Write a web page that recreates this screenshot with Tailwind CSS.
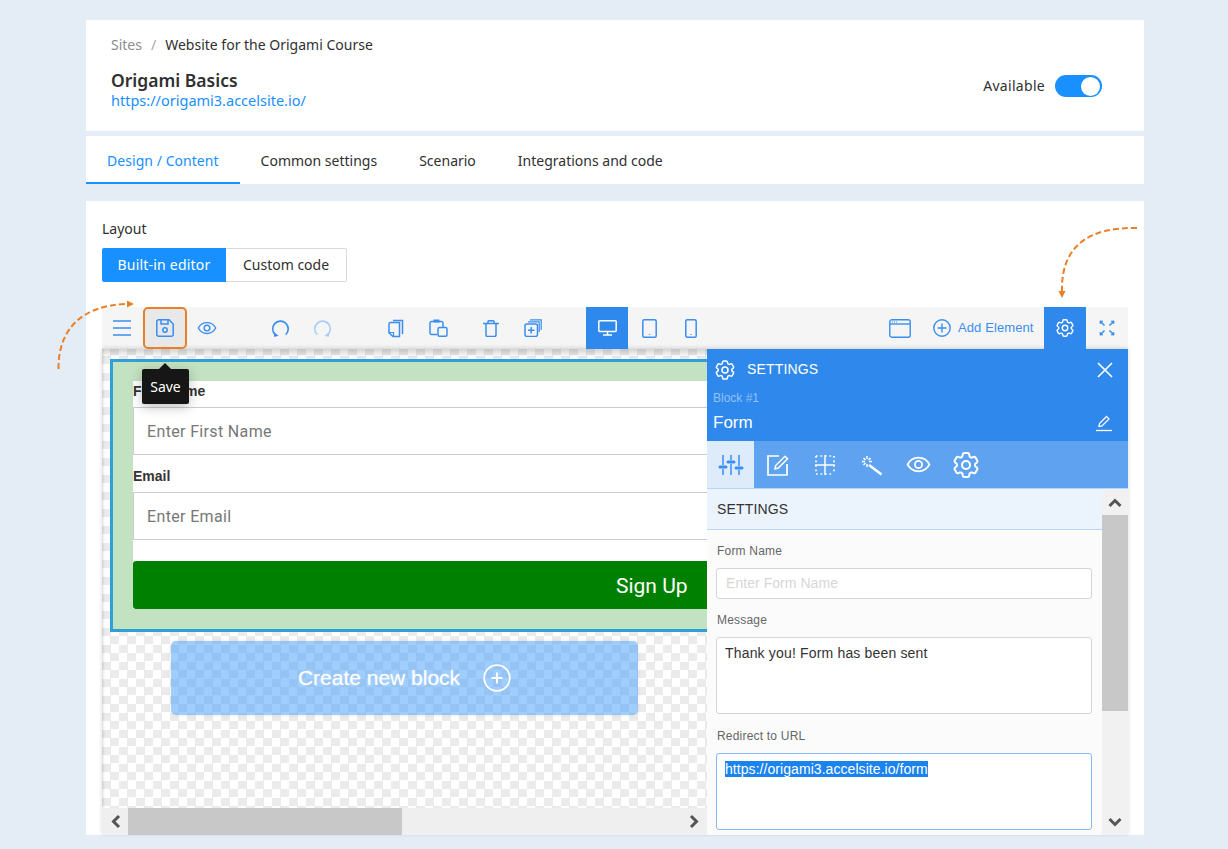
<!DOCTYPE html>
<html lang="en">
<head>
  <meta charset="UTF-8" />
  <title>Origami Basics</title>
  <script src="https://cdn.jsdelivr.net/npm/@tailwindcss/browser@4"></script>
</head>
<body class="bg-[#e4ecf6] font-['Noto_Sans',sans-serif] text-[14px] text-[#303030]">

  <svg class="hidden">
    <symbol id="gear" viewBox="0 0 24 24" fill="none" stroke="currentColor" stroke-width="1.500">
      <path d="M9.594 3.94c.09-.542.56-.94 1.11-.94h2.593c.55 0 1.02.398 1.11.94l.213 1.281c.063.374.313.686.645.87.074.04.147.083.22.127.325.196.72.257 1.075.124l1.217-.456a1.125 1.125 0 0 1 1.37.49l1.296 2.247a1.125 1.125 0 0 1-.26 1.431l-1.003.827c-.293.241-.438.613-.43.992a7.723 7.723 0 0 1 0 .255c-.008.378.137.75.43.991l1.004.827c.424.35.534.955.26 1.43l-1.298 2.247a1.125 1.125 0 0 1-1.369.491l-1.217-.456c-.355-.133-.75-.072-1.076.124a6.47 6.47 0 0 1-.22.128c-.331.183-.581.495-.644.869l-.213 1.281c-.09.543-.56.94-1.11.94h-2.594c-.55 0-1.019-.398-1.11-.94l-.213-1.281c-.062-.374-.312-.686-.644-.87a6.52 6.52 0 0 1-.22-.127c-.325-.196-.72-.257-1.076-.124l-1.217.456a1.125 1.125 0 0 1-1.369-.49l-1.297-2.247a1.125 1.125 0 0 1 .26-1.431l1.004-.827c.292-.24.437-.613.43-.991a6.932 6.932 0 0 1 0-.255c.007-.38-.138-.751-.43-.992l-1.004-.827a1.125 1.125 0 0 1-.26-1.43l1.297-2.247a1.125 1.125 0 0 1 1.37-.491l1.216.456c.356.133.751.072 1.076-.124.072-.044.146-.086.22-.128.332-.183.582-.495.644-.869l.214-1.28Z"/>
      <circle cx="12" cy="12" r="3"/>
    </symbol>
    <symbol id="eye" viewBox="0 0 24 24" fill="none" stroke="currentColor" stroke-width="1.700">
      <path d="M1.500 12C4 7.500 7.700 5.500 12 5.500s8 2 10.500 6.500C20 16.500 16.300 18.500 12 18.500S4 16.500 1.500 12Z"/>
      <circle cx="12" cy="12" r="3.400"/>
    </symbol>
    <symbol id="undo" viewBox="0 0 20 20" fill="none" stroke="currentColor" stroke-width="1.700">
      <path d="M15.500 16.500A8.200 8.200 0 1 0 5 17"/>
      <path d="M2.500 13.500 3.500 19 8 17.500Z" fill="currentColor" stroke="none"/>
    </symbol>
    <symbol id="redo" viewBox="0 0 20 20" fill="none" stroke="currentColor" stroke-width="1.700">
      <path d="M4.500 16.500A8.200 8.200 0 1 1 15 17"/>
      <path d="M17.500 13.500 16.500 19 12 17.500Z" fill="currentColor" stroke="none"/>
    </symbol>
  </svg>

  <div class="relative w-[1228px] h-[849px] overflow-hidden pt-[20px] pl-[86px] pr-[84px]">

    <!-- site header -->
    <div class="bg-white h-[111px] pl-[25px] pr-[42px] pt-[15px] flex justify-between">
      <div>
        <div class="flex leading-[20px]">
          <span class="text-[#8c8c8c]">Sites</span>
          <span class="text-[#a6a6a6] mx-[9px]">/</span>
          <span>Website for the Origami Course</span>
        </div>
        <div class="text-[17.500px] font-semibold leading-[22px] mt-[14px]">Origami Basics</div>
        <div class="text-[#1890ff] text-[14.500px] leading-[20px] -mt-[1px]">https://origami3.accelsite.io/</div>
      </div>
      <div class="flex items-center gap-[10px] h-[22px] mt-[40px]">
        <span class="-mt-[2px] tracking-[0.3px]">Available</span>
        <div class="w-[47px] h-[22px] rounded-full bg-[#1890ff] flex items-center justify-end pr-[2px]">
          <div class="w-[19px] h-[19px] rounded-full bg-white"></div>
        </div>
      </div>
    </div>

    <!-- tabs -->
    <div class="bg-white h-[48px] mt-[5px] flex">
      <div class="px-[21px] h-[48px] leading-[49px] text-[#1890ff] border-b-2 border-[#1890ff] tracking-[0.05px]">Design / Content</div>
      <div class="px-[21px] leading-[49px]">Common settings</div>
      <div class="px-[21px] leading-[49px]">Scenario</div>
      <div class="px-[21px] leading-[49px]">Integrations and code</div>
    </div>

    <!-- layout card -->
    <div class="bg-white h-[634px] mt-[17px] px-[16px] pt-[17px]">
      <div class="leading-[22px]">Layout</div>
      <div class="flex mt-[8px] h-[34px] leading-[34px]">
        <div class="w-[124px] text-center text-white bg-[#1890ff] rounded-l-[2px] tracking-[0.2px]">Built-in editor</div>
        <div class="w-[121px] text-center bg-white border border-l-0 border-[#d9d9d9] rounded-r-[2px] leading-[32px]">Custom code</div>
      </div>

      <div class="mt-[25px] w-[1026px]">
        <!-- toolbar -->
        <div class="h-[42px] bg-[#f5f5f5] flex items-center text-[#3a8eef]">
          <div class="w-[40px] flex justify-center">
            <svg width="18" height="16" viewBox="0 0 18 16" stroke="currentColor" stroke-width="1.500"><path d="M0 1h18M0 8h18M0 15h18"/></svg>
          </div>
          <div class="ml-[1px] w-[44px] h-[42px] bg-[#e8e8e8] border-2 border-[#e8802a] rounded-[5px] flex items-center justify-center">
            <svg width="18" height="18" viewBox="0 0 18 18" fill="none" stroke="currentColor" stroke-width="1.500"><path d="M1.500.8h11.500l4.200 4.200v10.500a1.700 1.700 0 0 1-1.700 1.700H2.500a1.700 1.700 0 0 1-1.700-1.700V2.500A1.700 1.700 0 0 1 2.500.8Z"/><path d="M5 1v4h7V1"/><circle cx="9" cy="11" r="2.200"/></svg>
          </div>
          <div class="w-[39px] flex justify-center">
            <svg width="20" height="20"><use href="#eye"/></svg>
          </div>
          <div class="ml-[33px] w-[42px] flex justify-center">
            <svg width="19" height="19"><use href="#undo"/></svg>
          </div>
          <div class="w-[42px] flex justify-center text-[#a9cdf6]">
            <svg width="19" height="19"><use href="#redo"/></svg>
          </div>
          <div class="ml-[32px] w-[42px] flex justify-center">
            <svg width="16" height="19" viewBox="0 0 16 19" fill="none" stroke="currentColor" stroke-width="1.500"><path d="M2.500 3.500h9v14H5L1 14V5a1.500 1.500 0 0 1 1.500-1.500Z"/><path d="M5 1.500h9.500V15"/><path d="M1 13.500h4.500v4" stroke-width="1.200"/></svg>
          </div>
          <div class="w-[42px] flex justify-center">
            <svg width="19" height="18" viewBox="0 0 19 18" fill="none" stroke="currentColor" stroke-width="1.500"><path d="M8 15.500H2.500A1.500 1.500 0 0 1 1 14V4a1.500 1.500 0 0 1 1.500-1.500h10A1.500 1.500 0 0 1 14 4v4"/><path d="M4.500 2h6" stroke-width="3"/><rect x="9" y="8.500" width="9" height="8.700" rx="1.500"/></svg>
          </div>
          <div class="ml-[11px] w-[42px] flex justify-center">
            <svg width="16" height="17" viewBox="0 0 16 17" fill="none" stroke="currentColor" stroke-width="1.500"><path d="M0 3.500h16M3 3.500V15a1.500 1.500 0 0 0 1.500 1.500h7A1.500 1.500 0 0 0 13 15V3.500M5 3.500V1.500A1 1 0 0 1 6 .8h4a1 1 0 0 1 1 .7v2"/></svg>
          </div>
          <div class="w-[42px] flex justify-center">
            <svg width="18" height="18" viewBox="0 0 18 18" fill="none" stroke="currentColor" stroke-width="1.500"><rect x="1" y="5" width="12.500" height="12.500" rx="2"/><path d="M7.200 8v6.500M4 11.200h6.500"/><path d="M4 2.800h11.200V13M6 .8h11.200V11" stroke-width="1.200"/></svg>
          </div>
          <div class="ml-[32px] w-[42px] h-[42px] bg-[#2f88ec] text-white flex items-center justify-center">
            <svg width="19" height="16" viewBox="0 0 19 16" fill="none" stroke="currentColor" stroke-width="1.500"><rect x=".8" y=".8" width="17.400" height="10.600" rx=".8"/><path d="M9.500 11.500v3M5 15h9"/></svg>
          </div>
          <div class="w-[42px] flex justify-center">
            <svg width="15" height="19" viewBox="0 0 15 19" fill="none" stroke="currentColor" stroke-width="1.500"><rect x=".8" y=".8" width="13.400" height="17.400" rx="1.500"/><path d="M7.500 15.200v.8"/></svg>
          </div>
          <div class="w-[42px] flex justify-center">
            <svg width="12" height="19" viewBox="0 0 12 19" fill="none" stroke="currentColor" stroke-width="1.500"><rect x=".8" y=".8" width="10.400" height="17.400" rx="1.500"/><path d="M6 15.200v.8"/></svg>
          </div>
          <div class="ml-auto w-[42px] flex justify-center">
            <svg width="22" height="19" viewBox="0 0 22 19" fill="none" stroke="currentColor" stroke-width="1.400"><rect x=".8" y=".8" width="20.400" height="17.400" rx="2"/><path d="M1 5h20"/><path d="M3 3h1M5 3h1M7 3h1" stroke-width="1"/></svg>
          </div>
          <div class="w-[123px] flex items-center pl-[12px] gap-[7px] font-['Liberation_Sans',sans-serif] text-[13px] tracking-[0.1px] whitespace-nowrap">
            <svg width="18" height="18" viewBox="0 0 18 18" fill="none" stroke="currentColor" stroke-width="1.400"><circle cx="9" cy="9" r="8.200"/><path d="M9 4.500v9M4.500 9h9"/></svg>
            <span class="-mt-[1px]">Add Element</span>
          </div>
          <div class="w-[42px] h-[42px] bg-[#2f88ec] text-white flex items-center justify-center">
            <svg width="22" height="22"><use href="#gear"/></svg>
          </div>
          <div class="w-[42px] flex justify-center">
            <svg width="16" height="16" viewBox="0 0 16 16" fill="currentColor" stroke="currentColor" stroke-width="1.200"><path d="M1 1l4.500 4.500M15 1l-4.500 4.500M1 15l4.500-4.500M15 15l-4.500-4.500" fill="none" stroke-width="1.500"/><path d="M1 1v3l3-3ZM15 1v3l-3-3ZM1 15v-3l3 3ZM15 15v-3l-3 3Z" stroke-width=".6"/></svg>
          </div>
        </div>

        <!-- editor body -->
        <div class="flex h-[486px] shadow-[0_-1px_4px_rgba(0,0,0,0.15)] font-['Liberation_Sans',sans-serif]">

          <!-- canvas -->
          <div class="w-[605px] flex flex-col shrink-0">
            <div class="h-[459px] overflow-hidden pl-[8px] pt-[10px] bg-[repeating-conic-gradient(#ebebeb_0_25%,#ffffff_0_50%)] bg-[length:17px_17px] bg-[position:0_-2px] shadow-[inset_0_8px_6px_-4px_rgba(0,0,0,0.18),inset_3px_0_3px_-2px_rgba(0,0,0,0.15)]">
              <div class="w-[700px] h-[273px] border-[3px] border-[#2f9fd6] border-r-0 bg-[#c3e2c1] pl-[20px] pt-[19px]">
                <div class="bg-white h-[228px] w-[680px]">
                  <div class="h-[26px] leading-[18px] pt-[1px] font-bold text-[#333]">First Name</div>
                  <div class="h-[48px] border border-[#ccc] pl-[13px] leading-[47px] text-[16px] text-[#777] font-['Roboto',sans-serif] tracking-[0.35px]">Enter First Name</div>
                  <div class="h-[37px] leading-[42px] font-bold text-[#333]">Email</div>
                  <div class="h-[48px] border border-[#ccc] pl-[13px] leading-[47px] text-[16px] text-[#777] font-['Roboto',sans-serif] tracking-[0.35px]">Enter Email</div>
                  <div class="h-[21px]"></div>
                  <div class="h-[48px] bg-[#008000] rounded-[3px] text-white text-[21px] font-['Roboto',sans-serif] leading-[50px] pl-[483px]">Sign Up</div>
                </div>
              </div>
              <div class="ml-[61px] mt-[9px] w-[467px] h-[74px] rounded-[5px] bg-[#3f9bfb]/50 flex items-center justify-center gap-[23px] text-white text-[21px] shadow-[0_0_4px_rgba(0,0,0,0.08)]">
                <span class="[text-shadow:0_0_2px_rgba(255,255,255,0.5)]">Create new block</span>
                <svg width="28" height="28" viewBox="0 0 28 28" fill="none" stroke="white" stroke-width="1.800"><circle cx="14" cy="14" r="12.800"/><path d="M14 8.500v11M8.500 14h11"/></svg>
              </div>
            </div>
            <!-- horizontal scrollbar -->
            <div class="h-[27px] bg-[#efefef] flex items-stretch">
              <div class="w-[26px] flex items-center justify-center">
                <svg width="11" height="15" viewBox="0 0 11 15" fill="none" stroke="#555" stroke-width="3"><path d="M9 2 3.500 7.500 9 13"/></svg>
              </div>
              <div class="w-[274px] bg-[#c8c8c8]"></div>
              <div class="ml-auto w-[26px] flex items-center justify-center">
                <svg width="11" height="15" viewBox="0 0 11 15" fill="none" stroke="#555" stroke-width="3"><path d="M2 2l5.500 5.500L2 13"/></svg>
              </div>
            </div>
          </div>

          <!-- settings panel -->
          <div class="w-[421px] flex flex-col relative z-10">
            <div class="h-[92px] bg-[#2f88ec] text-white relative">
              <div class="flex items-center h-[41px] pl-[6px]">
                <svg width="24" height="24" class="shrink-0"><use href="#gear"/></svg>
                <span class="ml-[10px] tracking-[0.15px]">SETTINGS</span>
                <svg width="16" height="16" viewBox="0 0 16 16" stroke="white" stroke-width="1.700" class="ml-auto mr-[15px]"><path d="M1 1l14 14M15 1 1 15"/></svg>
              </div>
              <div class="pl-[6px] text-[12px] leading-[14px] text-[#93c0f5] mt-[1px]">Block #1</div>
              <div class="flex items-center pl-[6px] mt-[6px] text-[17px] leading-[24px]">
                <span>Form</span>
                <svg width="18" height="18" viewBox="0 0 18 18" fill="none" stroke="white" stroke-width="1.300" class="ml-auto mr-[15px]"><path d="M4 12.500 4.500 9.500 11.500 2.500 14 5 7 12 4 12.500Z"/><path d="M1 16.500h16"/></svg>
              </div>
            </div>
            <div class="h-[47px] bg-[#5fa3f0] flex text-white">
              <div class="w-[47px] bg-[#deebfb] text-[#3a8eef] flex items-center justify-center">
                <svg width="26" height="22" viewBox="0 0 26 22" fill="none" stroke="currentColor" stroke-width="1.500"><path d="M5 1v10M5 15v6M13 1v5M13 10v11M21 1v11M21 16v5"/><path d="M2 13h6M10 8h6M18 14h6" stroke-width="3" stroke-linecap="round"/></svg>
              </div>
              <div class="w-[47px] flex items-center justify-center">
                <svg width="22" height="22" viewBox="0 0 22 22" fill="none" stroke="white" stroke-width="1.700"><path d="M12 2H1v19h19V10"/><path d="M8 15l.7-3.500L18 2.200 20.500 4.700 11.300 14 8 15Z" stroke-width="1.500"/></svg>
              </div>
              <div class="w-[47px] flex items-center justify-center">
                <svg width="20" height="20" viewBox="0 0 20 20" fill="none" stroke="white" stroke-width="1.500"><path d="M10 0v20M0 10h20"/><path d="M1 1v18M19 1v18M1 1h18M1 19h18" stroke-width="1.700" stroke-dasharray="1.700 2.800"/></svg>
              </div>
              <div class="w-[47px] flex items-center justify-center">
                <svg width="22" height="22" viewBox="0 0 22 22" fill="none" stroke="white" stroke-width="1.500"><path d="M8 11l12.500 9.500" stroke-width="2.500"/><path d="M6 2v3M6 10v3M1 7.500h3M8 7.500h3M2.500 4l2 2M9.500 4l-2 2M2.500 11l2-2"/></svg>
              </div>
              <div class="w-[47px] flex items-center justify-center">
                <svg width="25" height="25"><use href="#eye"/></svg>
              </div>
              <div class="w-[47px] flex items-center justify-center">
                <svg width="32" height="32"><use href="#gear"/></svg>
              </div>
            </div>
            <div class="flex flex-1 min-h-0 border-t border-[#b8d6f5]">
              <div class="w-[395px] bg-[#fbfbfb] overflow-hidden">
                <div class="h-[41px] bg-[#ebf3fc] border-b border-[#b8d6f5] leading-[41px] pl-[10px] text-[#333] tracking-[0.15px]">SETTINGS</div>
                <div class="pl-[9px] pr-[10px]">
                  <div class="text-[12px] leading-[14px] text-[#666] mt-[14px] pl-[1px] tracking-[0.2px]">Form Name</div>
                  <div class="mt-[10px] h-[31px] bg-white border border-[#d4d4d4] rounded-[3px] pl-[9px] leading-[28px] text-[#d6d6d6] tracking-[0.05px]">Enter Form Name</div>
                  <div class="text-[12px] leading-[14px] text-[#666] mt-[14px] pl-[1px] tracking-[0.2px]">Message</div>
                  <div class="mt-[10px] h-[77px] bg-white border border-[#d4d4d4] rounded-[3px] pl-[8px] pt-[7px] leading-[16px] text-[#333] tracking-[0.17px]">Thank you! Form has been sent</div>
                  <div class="text-[12px] leading-[14px] text-[#666] mt-[15px] pl-[1px] tracking-[0.2px]">Redirect to URL</div>
                  <div class="mt-[10px] h-[77px] bg-white border border-[#8ab8f0] rounded-[3px] pl-[8px] pt-[7px] leading-[16px] tracking-[0.06px]"><span class="bg-[#1a83f0] text-white">https://origami3.accelsite.io/form</span></div>
                </div>
              </div>
              <!-- vertical scrollbar -->
              <div class="w-[26px] bg-[#f1f1f1] flex flex-col">
                <div class="h-[26px] flex items-center justify-center">
                  <svg width="16" height="11" viewBox="0 0 16 11" fill="none" stroke="#555" stroke-width="3"><path d="M2.500 9 8 3.500 13.500 9"/></svg>
                </div>
                <div class="h-[196px] bg-[#c8c8c8]"></div>
                <div class="mt-auto h-[26px] flex items-center justify-center">
                  <svg width="16" height="11" viewBox="0 0 16 11" fill="none" stroke="#555" stroke-width="3"><path d="M2.500 2 8 7.500 13.500 2"/></svg>
                </div>
              </div>
            </div>
          </div>
        </div>
      </div>
    </div>

    <!-- Save tooltip -->
    <div class="absolute left-[142px] top-[369px] w-[47px] h-[35px] bg-[#161616] rounded-[2px] text-white text-center leading-[35px] shadow-[0_3px_12px_rgba(0,0,0,0.25)]">
      <div class="absolute left-[17px] -top-[6px] w-0 h-0 border-x-[6px] border-x-transparent border-b-[6px] border-b-[#161616]"></div>
      Save
    </div>

    <!-- orange arrows -->
    <svg class="absolute left-0 top-0 pointer-events-none" width="1228" height="849" fill="none" stroke="#e8802a" stroke-width="2" stroke-dasharray="6 3">
      <path d="M58.500 369C58 331 80 305 128 304"/>
      <path d="M1137 228C1090 227 1061 245 1062 291"/>
      <path d="M1011 833C1012 790 990 768 945 768"/>
      <path d="M134 304 127 300.500V307.500Z" fill="#e8802a" stroke="none"/>
      <path d="M1062 298 1058.500 291H1065.500Z" fill="#e8802a" stroke="none"/>
      <path d="M938 768 945 764.500V771.500Z" fill="#e8802a" stroke="none"/>
    </svg>
  </div>
</body>
</html>
